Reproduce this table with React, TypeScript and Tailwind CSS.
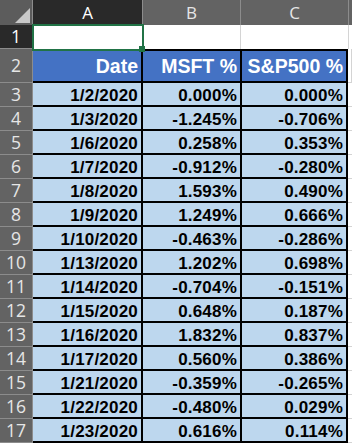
const rows: [string, string, string][] = [
  ["1/2/2020", "0.000%", "0.000%"],
  ["1/3/2020", "-1.245%", "-0.706%"],
  ["1/6/2020", "0.258%", "0.353%"],
  ["1/7/2020", "-0.912%", "-0.280%"],
  ["1/8/2020", "1.593%", "0.490%"],
  ["1/9/2020", "1.249%", "0.666%"],
  ["1/10/2020", "-0.463%", "-0.286%"],
  ["1/13/2020", "1.202%", "0.698%"],
  ["1/14/2020", "-0.704%", "-0.151%"],
  ["1/15/2020", "0.648%", "0.187%"],
  ["1/16/2020", "1.832%", "0.837%"],
  ["1/17/2020", "0.560%", "0.386%"],
  ["1/21/2020", "-0.359%", "-0.265%"],
  ["1/22/2020", "-0.480%", "0.029%"],
  ["1/23/2020", "0.616%", "0.114%"],
];

const headFont = "font-['Open_Sans','Noto_Sans',sans-serif]";
const cellFont = "font-['Liberation_Sans',Arial,sans-serif] font-bold";

function RowNum({ n, selected }: { n: number; selected?: boolean }) {
  return (
    <div
      className={`flex w-[33px] shrink-0 items-center justify-center border-r border-b border-[#8c8c8c] text-[17.5px] ${headFont} ${
        selected ? "bg-[#292929] text-white" : "bg-[#636363] text-[#e6e6e6]"
      }`}
    >
      {n}
    </div>
  );
}

function DataCell({ w, children }: { w: string; children: string }) {
  return (
    <div
      className={`${w} flex shrink-0 items-end justify-end border-r-2 border-b-2 border-black bg-[#bdd7ee] pr-[3px] text-[17px] leading-[18px] tracking-[0.2px] text-black ${cellFont}`}
    >
      {children}
    </div>
  );
}

function HeadCell({ w, children }: { w: string; children: string }) {
  return (
    <div
      className={`${w} flex shrink-0 items-end justify-end border-y-2 border-r-2 border-black bg-[#4472c4] pr-[3px] pb-[3px] text-[19.5px] leading-[24px] text-white ${cellFont}`}
    >
      {children}
    </div>
  );
}

export default function App() {
  return (
    <div className="relative h-[444px] w-[352px] overflow-hidden bg-white">
      {/* column headers */}
      <div className={`flex h-[25px] text-[17px] ${headFont}`}>
        <div className="relative w-[33px] shrink-0 border-r border-[#8c8c8c] bg-[#5c5c5c]">
          <svg className="absolute right-[2px] bottom-[2px]" width="15" height="15" viewBox="0 0 15 15">
            <polygon points="15,0 15,15 0,15" fill="#c8c8c8" />
          </svg>
        </div>
        <div className="flex w-[110px] shrink-0 items-center justify-center border-r border-[#8c8c8c] bg-[#292929] text-white">
          A
        </div>
        <div className="flex w-[98px] shrink-0 items-center justify-center border-r border-[#8c8c8c] bg-[#636363] text-[#e6e6e6]">
          B
        </div>
        <div className="flex w-[108px] shrink-0 items-center justify-center border-r border-[#8c8c8c] bg-[#636363] text-[#e6e6e6]">
          C
        </div>
        <div className="flex-1 bg-[#636363]" />
      </div>

      {/* row 1 */}
      <div className="flex h-[24px]">
        <RowNum n={1} selected />
        <div className="w-[110px] shrink-0 border-r border-[#d4d4d4]" />
        <div className="w-[98px] shrink-0 border-r border-[#d4d4d4]" />
        <div className="w-[108px] shrink-0 border-r border-[#d4d4d4]" />
        <div className="flex-1" />
      </div>

      {/* row 2 */}
      <div className="flex h-[34px]">
        <RowNum n={2} />
        <HeadCell w="w-[110px]">Date</HeadCell>
        <HeadCell w="w-[99px]">MSFT %</HeadCell>
        <HeadCell w="w-[106px]">S&amp;P500 %</HeadCell>
        <div className="flex-1 border-r border-b border-[#d4d4d4]" />
      </div>

      {rows.map(([d, m, s], i) => (
        <div key={d} className="flex h-[24px]">
          <RowNum n={i + 3} />
          <DataCell w="w-[110px]">{d}</DataCell>
          <DataCell w="w-[99px]">{m}</DataCell>
          <DataCell w="w-[106px]">{s}</DataCell>
          <div className="flex-1 border-b border-[#d4d4d4]" />
        </div>
      ))}

      {/* active cell selection */}
      <div className="absolute top-[24px] left-[32px] h-[27px] w-[112px] border-2 border-[#217346]" />
      <div className="absolute top-[46px] left-[139px] h-[6px] w-[6px] bg-[#217346]" />
    </div>
  );
}
